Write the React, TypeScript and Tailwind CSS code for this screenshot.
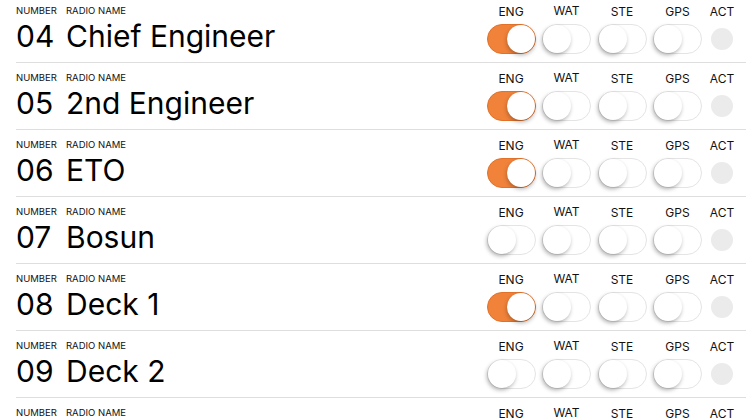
import React from "react";

type Radio = {
  num: string;
  name: string;
  eng: boolean;
};

const radios: Radio[] = [
  { num: "04", name: "Chief Engineer", eng: true },
  { num: "05", name: "2nd Engineer", eng: true },
  { num: "06", name: "ETO", eng: true },
  { num: "07", name: "Bosun", eng: false },
  { num: "08", name: "Deck 1", eng: true },
  { num: "09", name: "Deck 2", eng: false },
  { num: "10", name: "Deck 3", eng: false },
];

function Toggle({ on }: { on: boolean }) {
  return (
    <div
      className={
        on
          ? "relative w-[49px] h-[30px] rounded-full bg-[#f0823a] border border-[#e2722a]"
          : "relative w-[49px] h-[30px] rounded-full bg-white border border-[#e4e4e4]"
      }
    >
      <div
        className={
          on
            ? "absolute top-[0px] right-[0px] w-[28px] h-[28px] rounded-full bg-white shadow-[0_2px_4px_rgba(0,0,0,0.3)]"
            : "absolute top-[0px] left-[0px] w-[28px] h-[28px] rounded-full bg-white shadow-[-1px_2px_4px_rgba(0,0,0,0.32)]"
        }
      />
    </div>
  );
}

function Column({ label, children, lift }: { label: string; children: React.ReactNode; lift?: boolean }) {
  return (
    <div className="flex flex-col items-center w-[49px]">
      <div className={lift ? "text-[12px] leading-[14px] text-[#111] -mt-[1px] mb-[1px]" : "text-[12px] leading-[14px] text-[#111]"}>
        {label}
      </div>
      <div className="mt-[5px]">{children}</div>
    </div>
  );
}

function RadioRow({ radio }: { radio: Radio }) {
  return (
    <div className="flex h-[67px] ml-4 border-b border-[#dedede]">
      <div className="flex-1 flex flex-col pt-[9px]">
        <div className="flex text-[9.5px] leading-[11px] text-[#111]">
          <span className="w-[50px]">NUMBER</span>
          <span>RADIO NAME</span>
        </div>
        <div className="flex text-[30px] leading-[34px] text-black mt-[3px]">
          <span className="w-[50px]">{radio.num}</span>
          <span>{radio.name}</span>
        </div>
      </div>
      <div className="flex pt-[9px] pr-[12px]">
        <div className="flex gap-[6.5px]">
          <Column label="ENG">
            <Toggle on={radio.eng} />
          </Column>
          <Column label="WAT" lift>
            <Toggle on={false} />
          </Column>
          <Column label="STE">
            <Toggle on={false} />
          </Column>
          <Column label="GPS">
            <Toggle on={false} />
          </Column>
        </div>
        <div className="flex flex-col items-center w-[24px] ml-[8px]">
          <div className="text-[12px] leading-[14px] text-[#111]">ACT</div>
          <div className="mt-[9px] w-[22px] h-[22px] rounded-full bg-[#ebebeb]" />
        </div>
      </div>
    </div>
  );
}

export default function App() {
  return (
    <div className="w-[746px] h-[419px] overflow-hidden bg-white" style={{ fontFamily: "Inter, 'Liberation Sans', sans-serif" }}>
      <div className="-mt-[4px]">
        {radios.map((r) => (
          <RadioRow key={r.num} radio={r} />
        ))}
      </div>
    </div>
  );
}
